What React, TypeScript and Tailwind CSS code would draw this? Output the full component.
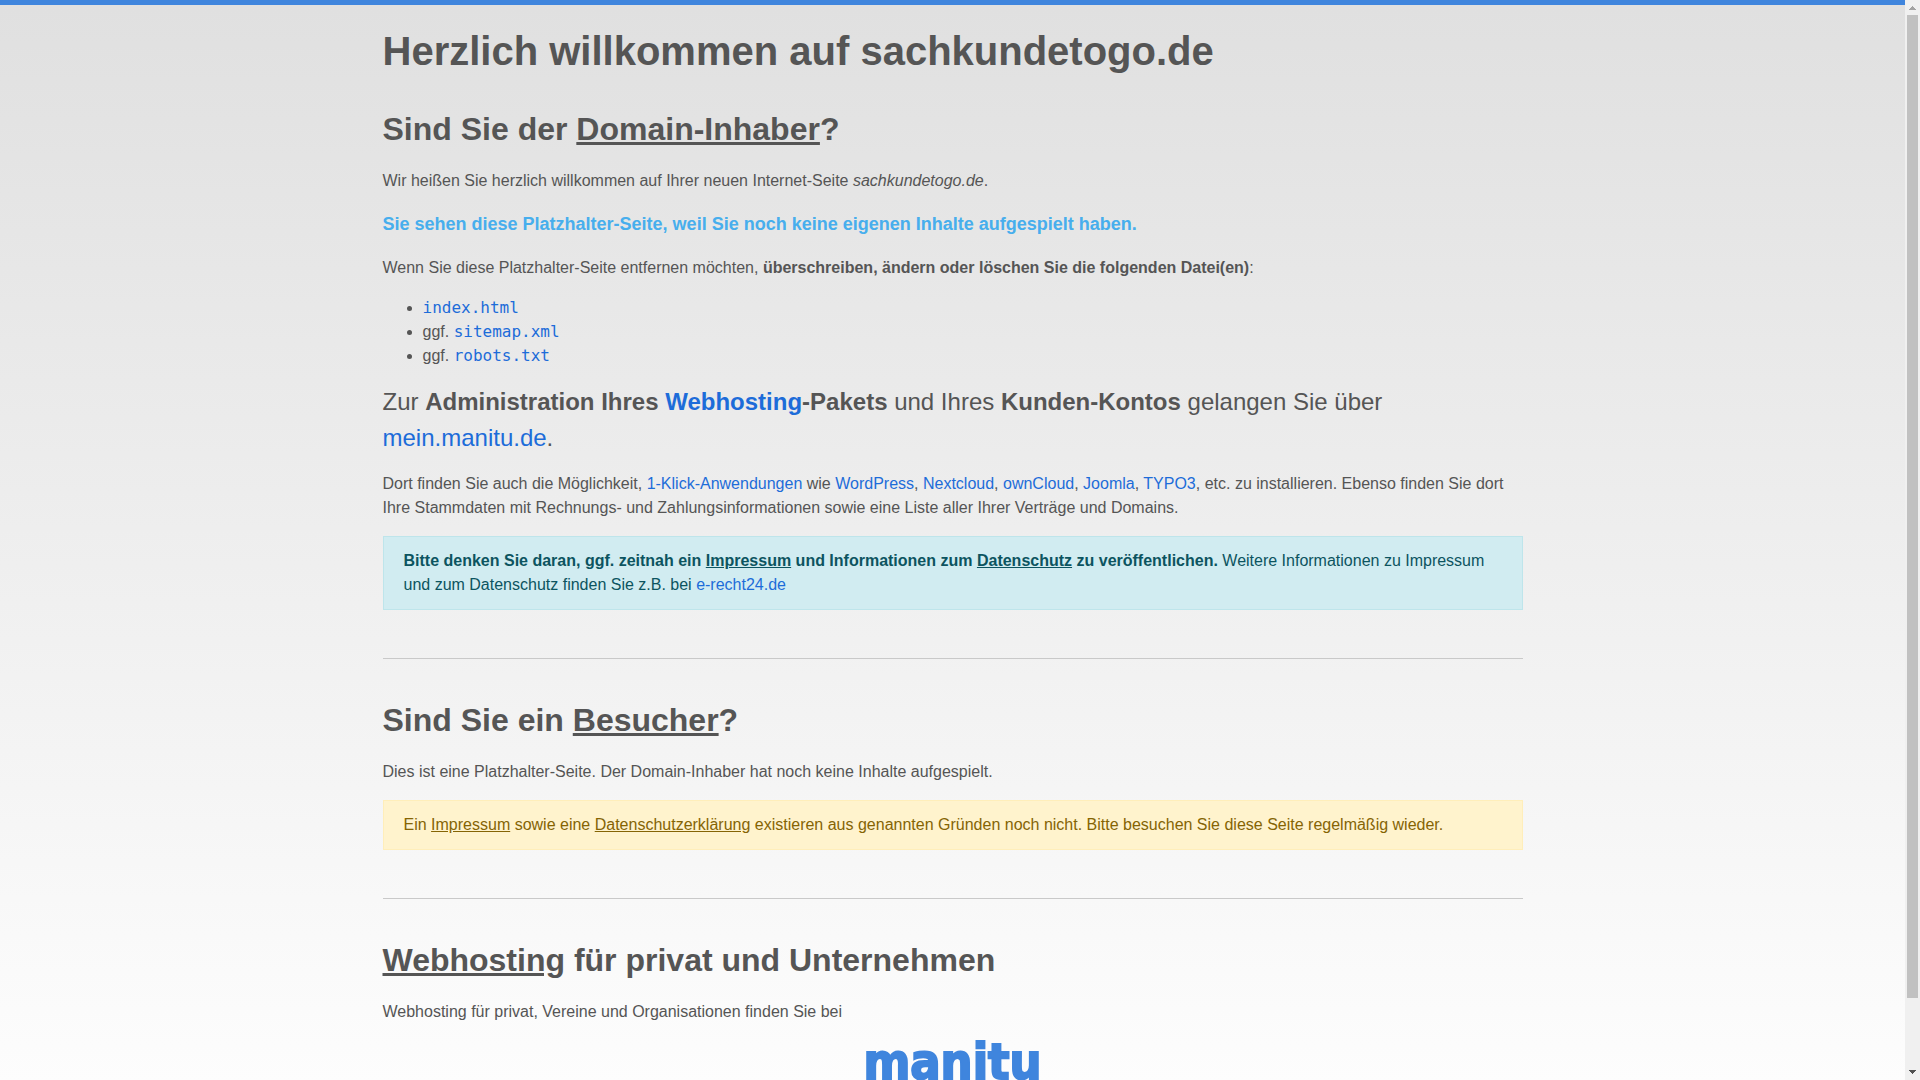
import React from "react";

const apps = ["WordPress", "Nextcloud", "ownCloud", "Joomla", "TYPO3"];

const files = [
  { prefix: "", name: "index.html" },
  { prefix: "ggf. ", name: "sitemap.xml" },
  { prefix: "ggf. ", name: "robots.txt" },
];

function Link({ children }: { children: React.ReactNode }) {
  return (
    <a href="#" className="text-[#1d6cd9] hover:underline">
      {children}
    </a>
  );
}

function SectionTitle({ children }: { children: React.ReactNode }) {
  return <h2 className="text-[32px] leading-[38px] font-bold mb-[21px]">{children}</h2>;
}

function Scrollbar() {
  return (
    <div className="w-[15px] shrink-0 bg-[#f0f0f0] flex flex-col items-center" aria-hidden="true">
      <svg className="w-[15px] h-[15px] shrink-0" viewBox="0 0 15 15" shapeRendering="crispEdges">
        <path d="M7 6h1v1h1v1h1v1h1v1H4V9h1V8h1V7h1z" fill="#a3a3a3" />
      </svg>
      <div className="flex-1 w-[11px]">
        <div className="h-[93.6%] bg-[#c1c1c1]" />
      </div>
      <svg className="w-[15px] h-[15px] shrink-0" viewBox="0 0 15 15" shapeRendering="crispEdges">
        <path d="M4 5h7v1h-1v1H9v1H8v1H7V8H6V7H5V6H4z" fill="#505050" />
      </svg>
    </div>
  );
}

function App() {
  return (
    <div className="flex h-screen overflow-hidden font-['Liberation_Sans',Arial,sans-serif] text-base text-[#555]">
      <div className="flex-1 min-w-0 overflow-hidden">
        <div className="border-t-[5px] border-[#3f85dd] bg-linear-to-b from-[#e0e0e0] to-white pt-[22px] pb-18">
          <main className="mx-auto w-full max-w-[1140px]">
            <h1 className="text-[40px] leading-[48px] font-bold mb-[35px]">
              Herzlich willkommen auf sachkundetogo.de
            </h1>

            <section>
              <SectionTitle>
                Sind Sie der <u>Domain-Inhaber</u>?
              </SectionTitle>
              <p className="mb-4">
                Wir heißen Sie herzlich willkommen auf Ihrer neuen Internet-Seite <em>sachkundetogo.de</em>.
              </p>
              <p className="mb-4 text-lg leading-[31px] font-bold text-[#47aeed]">
                Sie sehen diese Platzhalter-Seite, weil Sie noch keine eigenen Inhalte aufgespielt haben.
              </p>
              <p className="mb-4">
                Wenn Sie diese Platzhalter-Seite entfernen möchten,{" "}
                <b>überschreiben, ändern oder löschen Sie die folgenden Datei(en)</b>:
              </p>
              <ul className="mb-4 pl-10 list-disc">
                {files.map((file) => (
                  <li key={file.name}>
                    {file.prefix}
                    <code className="font-['DejaVu_Sans_Mono',monospace] text-[#1d6cd9]">{file.name}</code>
                  </li>
                ))}
              </ul>
              <p className="mb-4 text-2xl leading-9">
                Zur{" "}
                <b>
                  Administration Ihres <Link>Webhosting</Link>-Pakets
                </b>{" "}
                und Ihres <b>Kunden-Kontos</b> gelangen Sie über <Link>mein.manitu.de</Link>.
              </p>
              <p className="mb-4">
                Dort finden Sie auch die Möglichkeit, <Link>1-Klick-Anwendungen</Link> wie{" "}
                {apps.map((app) => (
                  <React.Fragment key={app}>
                    <Link>{app}</Link>,{" "}
                  </React.Fragment>
                ))}
                etc. zu installieren. Ebenso finden Sie dort Ihre Stammdaten mit Rechnungs- und
                Zahlungsinformationen sowie eine Liste aller Ihrer Verträge und Domains.
              </p>
              <div className="border border-[#bee5eb] bg-[#d1ecf1] text-[#0c5460] px-5 py-3">
                <b>
                  Bitte denken Sie daran, ggf. zeitnah ein <u>Impressum</u> und Informationen zum{" "}
                  <u>Datenschutz</u> zu veröffentlichen.
                </b>{" "}
                Weitere Informationen zu Impressum und zum Datenschutz finden Sie z.B. bei{" "}
                <Link>e-recht24.de</Link>
              </div>
            </section>

            <hr className="mt-12 mb-[42px] border-[#c9c9c9]" />

            <section>
              <SectionTitle>
                Sind Sie ein <u>Besucher</u>?
              </SectionTitle>
              <p className="mb-4">
                Dies ist eine Platzhalter-Seite. Der Domain-Inhaber hat noch keine Inhalte aufgespielt.
              </p>
              <div className="border border-[#ffeeba] bg-[#fff3cd] text-[#856404] px-5 py-3">
                Ein <u>Impressum</u> sowie eine <u>Datenschutzerklärung</u> existieren aus genannten Gründen
                noch nicht. Bitte besuchen Sie diese Seite regelmäßig wieder.
              </div>
            </section>

            <hr className="mt-12 mb-[42px] border-[#c9c9c9]" />

            <section>
              <SectionTitle>
                <u>Webhosting</u> für privat und Unternehmen
              </SectionTitle>
              <p className="mb-4">Webhosting für privat, Vereine und Organisationen finden Sie bei</p>
              <a
                href="#"
                className="block text-center font-['DejaVu_Sans_Condensed','DejaVu_Sans',sans-serif] font-bold text-[50px] leading-[44px] text-[#3f85dd] [-webkit-text-stroke:2px_#3f85dd]"
              >
                manitu
              </a>
            </section>
          </main>
        </div>
      </div>
      <Scrollbar />
    </div>
  );
}

export default App;
